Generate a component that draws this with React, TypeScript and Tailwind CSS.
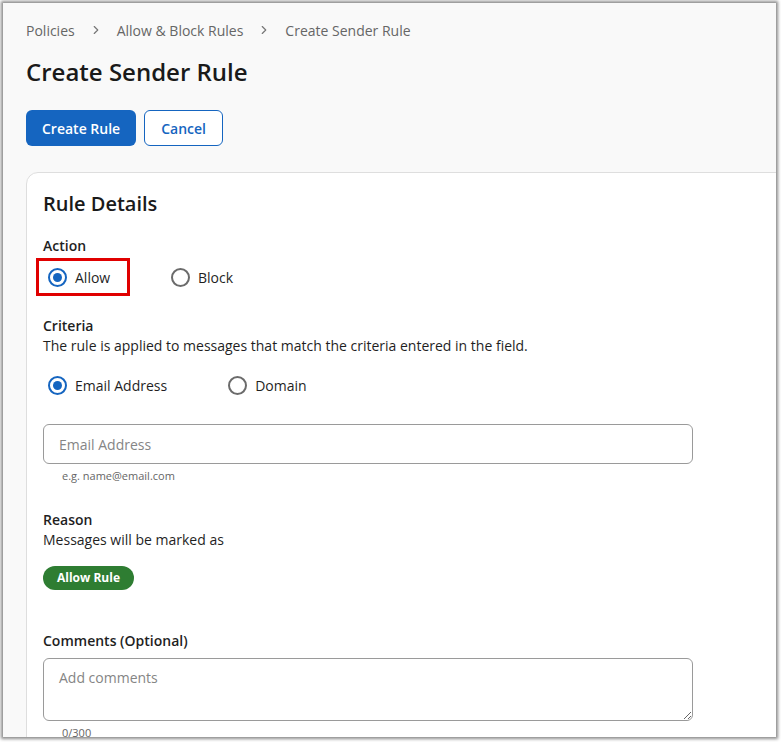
import { ChevronRight } from "lucide-react";

function Radio({ checked, label }: { checked?: boolean; label: string }) {
  return (
    <label className="flex items-center gap-[8px] cursor-pointer">
      <span
        className={`flex items-center justify-center w-[19px] h-[19px] rounded-full border-2 ${
          checked ? "border-[#1565c0]" : "border-[#6b6b6b]"
        }`}
      >
        {checked && <span className="w-[9px] h-[9px] rounded-full bg-[#1565c0]" />}
      </span>
      <span className="text-[14px] text-[#1f1f1f]">{label}</span>
    </label>
  );
}

export default function App() {
  return (
    <div
      className="w-[781px] h-[742px] bg-white pt-[3px] pl-[3px] pr-[5px] pb-[5px]"
      style={{ fontFamily: '"Open Sans", "Noto Sans", sans-serif' }}
    >
      <div className="h-full overflow-hidden bg-[#f9f9f9] shadow-[0_0_3px_2px_rgba(0,0,0,0.45)] pl-[23px]">
        {/* Breadcrumb */}
        <nav className="flex items-center h-[20px] mt-[17px] text-[14px] text-[#666]">
          <span>Policies</span>
          <ChevronRight className="w-[14px] h-[14px] mx-[14px] text-[#777]" strokeWidth={2} />
          <span>Allow &amp; Block Rules</span>
          <ChevronRight className="w-[14px] h-[14px] mx-[14px] text-[#777]" strokeWidth={2} />
          <span>Create Sender Rule</span>
        </nav>

        <h1 className="mt-[16px] text-[24px] leading-[32px] font-semibold text-[#1a1a1a]">
          Create Sender Rule
        </h1>

        <div className="flex gap-[8px] mt-[22px]">
          <button className="h-[36px] px-[16px] rounded-[6px] bg-[#1565c0] text-white text-[14px] font-semibold">
            Create Rule
          </button>
          <button className="h-[36px] px-[16px] rounded-[6px] border border-[#1565c0] bg-white text-[#1565c0] text-[14px] font-semibold">
            Cancel
          </button>
        </div>

        {/* Card */}
        <div className="mt-[26px] -mr-[20px] bg-white border border-[#dedede] rounded-tl-[12px] pl-[16px] pt-[17px] pb-[40px]">
          <h2 className="text-[20px] leading-[28px] font-semibold text-[#1a1a1a]">Rule Details</h2>

          <div className="mt-[18px] text-[14px] leading-[20px] font-semibold text-[#1f1f1f]">Action</div>
          <div className="flex items-center mt-[2px] -ml-[7px]">
            <div className="border-[3px] border-[#e00000] h-[38px] w-[94px] flex items-center pl-[9px]">
              <Radio checked label="Allow" />
            </div>
            <div className="ml-[41px]">
              <Radio label="Block" />
            </div>
          </div>

          <div className="mt-[20px] text-[14px] leading-[20px] font-semibold text-[#1f1f1f]">Criteria</div>
          <div className="text-[14px] leading-[20px] text-[#1f1f1f]">
            The rule is applied to messages that match the criteria entered in the field.
          </div>
          <div className="flex items-center gap-[61px] mt-[19px] ml-[5px] h-[20px]">
            <Radio checked label="Email Address" />
            <Radio label="Domain" />
          </div>

          <input
            type="text"
            placeholder="Email Address"
            className="mt-[29px] block w-[650px] h-[40px] rounded-[6px] border border-[#9a9a9a] px-[15px] text-[14px] text-[#1f1f1f] placeholder:text-[#858585] outline-none"
          />
          <div className="mt-[4px] ml-[19px] text-[11px] leading-[16px] text-[#666]">e.g. name@email.com</div>

          <div className="mt-[26px] text-[14px] leading-[20px] font-semibold text-[#1f1f1f]">Reason</div>
          <div className="text-[14px] leading-[20px] text-[#1f1f1f]">Messages will be marked as</div>
          <div className="mt-[14px]">
            <span className="inline-flex items-center h-[24px] px-[14px] rounded-full bg-[#2e7d32] text-white text-[12px] font-bold">
              Allow Rule
            </span>
          </div>

          <div className="mt-[41px] text-[14px] leading-[20px] font-semibold text-[#1f1f1f]">
            Comments (Optional)
          </div>
          <textarea
            placeholder="Add comments"
            className="mt-[7px] block w-[650px] h-[63px] rounded-[6px] border border-[#9a9a9a] px-[15px] py-[8px] text-[14px] text-[#1f1f1f] placeholder:text-[#858585] outline-none"
          />
          <div className="mt-[4px] ml-[19px] text-[11px] leading-[16px] text-[#666]">0/300</div>
        </div>
      </div>
    </div>
  );
}
